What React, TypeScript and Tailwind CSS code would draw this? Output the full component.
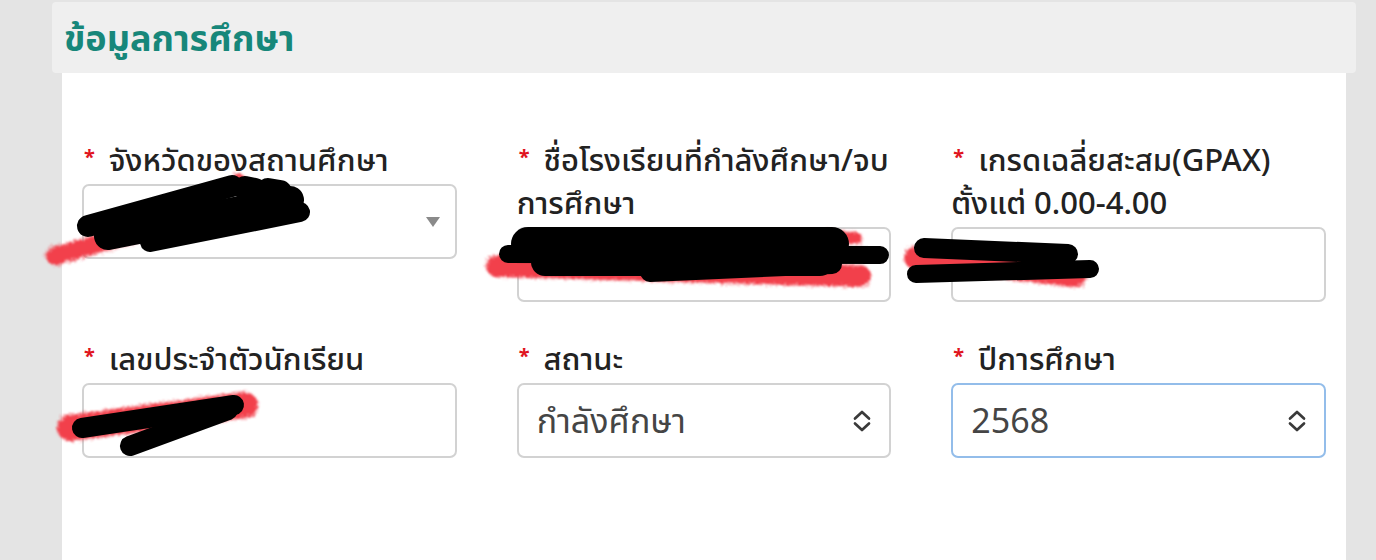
const fields = [
  { label: ['จังหวัดของสถานศึกษา'], kind: 'dropdown', value: '' },
  { label: ['ชื่อโรงเรียนที่กำลังศึกษา/จบ', 'การศึกษา'], kind: 'text', value: '' },
  { label: ['เกรดเฉลี่ยสะสม(GPAX)', 'ตั้งแต่ 0.00-4.00'], kind: 'text', value: '' },
  { label: ['เลขประจำตัวนักเรียน'], kind: 'text', value: '' },
  { label: ['สถานะ'], kind: 'select', value: 'กำลังศึกษา' },
  { label: ['ปีการศึกษา'], kind: 'select', value: '2568', focused: true },
]

function UpDown() {
  return (
    <svg width="22" height="24" viewBox="0 0 22 24" fill="none" stroke="#3a3a3a" strokeWidth="2.7" strokeLinecap="round" strokeLinejoin="round">
      <path d="M4 9.5l7-6.5 7 6.5" />
      <path d="M4 14.5l7 6.5 7-6.5" />
    </svg>
  )
}

// redaction marks drawn over the filled inputs
function Scribbles() {
  return (
    <svg className="pointer-events-none absolute left-0 top-0" width="1376" height="560" viewBox="0 0 1376 560">
      <defs>
        <filter id="fuzz" x="-20%" y="-50%" width="140%" height="200%">
          <feTurbulence type="fractalNoise" baseFrequency="0.9" numOctaves="2" result="n" />
          <feDisplacementMap in="SourceGraphic" in2="n" scale="9" />
          <feGaussianBlur stdDeviation="0.8" />
        </filter>
      </defs>
      <g filter="url(#fuzz)" stroke="#f2404c" strokeLinecap="round" fill="none">
        <path d="M55 256 L140 232" strokeWidth="18" />
        <path d="M238 178 L248 186" strokeWidth="10" />
        <path d="M497 266 L860 276" strokeWidth="22" />
        <path d="M830 236 L856 238" strokeWidth="12" />
        <path d="M915 258 L1075 276" strokeWidth="22" />
        <path d="M70 428 L245 405" strokeWidth="26" />
      </g>
      <g stroke="#000" strokeLinecap="round" strokeLinejoin="round" fill="none">
        <path d="M88 226 L232 186" strokeWidth="22" />
        <path d="M108 236 L290 200" strokeWidth="28" />
        <path d="M150 242 L300 212" strokeWidth="20" />
        <path d="M245 188 L255 190" strokeWidth="24" />
        <path d="M268 190 L280 192" strokeWidth="24" />
        <path d="M508 254 L880 255" strokeWidth="18" />
        <path d="M528 244 L832 244" strokeWidth="34" />
        <path d="M545 262 L820 262" strokeWidth="28" />
        <path d="M650 272 L832 264" strokeWidth="20" />
        <path d="M924 248 L1068 254" strokeWidth="20" />
        <path d="M916 274 L1090 269" strokeWidth="18" />
        <path d="M82 428 L234 405" strokeWidth="20" />
        <path d="M130 446 L228 410" strokeWidth="20" />
      </g>
    </svg>
  )
}

export default function App() {
  return (
    <div className="relative h-[560px] w-[1376px] overflow-hidden bg-[#e4e4e4] font-['Noto_Sans','Noto_Sans_Thai',sans-serif]">
      <div className="ml-[52px] w-[1304px] pt-[2px]">
        <div className="flex h-[71px] items-center rounded-sm bg-[#efefef] pl-3">
          <h2 className="text-[36px] font-bold text-[#17877a]">ข้อมูลการศึกษา</h2>
        </div>
        <div className="mx-[10px] h-[500px] bg-white px-5 pt-[65px]">
          <div className="grid grid-cols-3 gap-x-[60px] gap-y-[35px]">
            {fields.map((f, i) => (
              <div key={i}>
                <label className="block text-[31px] font-medium leading-[43px] text-[#222]">
                  {f.label.map((line, j) => (
                    <span key={j} className="block">
                      {j === 0 && (
                        <span className="mr-[14px] ml-[2px] inline-block align-top text-[20px] font-bold leading-[38px] text-[#e0141e]">*</span>
                      )}
                      {line}
                    </span>
                  ))}
                </label>
                <div
                  className={
                    'mt-[3px] flex h-[75px] items-center justify-between rounded-[7px] border-2 pl-[18px] pr-4 ' +
                    (f.focused ? 'border-[#93bdea]' : 'border-[#d2d2d2]')
                  }
                >
                  <span className="text-[34px] text-[#454545]">{f.value}</span>
                  {f.kind === 'select' && <UpDown />}
                  {f.kind === 'dropdown' && (
                    <span className="mr-[-1px] h-0 w-0 border-x-[7px] border-t-[10px] border-x-transparent border-t-[#8a8a8a]" />
                  )}
                </div>
              </div>
            ))}
          </div>
        </div>
      </div>
      <Scribbles />
    </div>
  )
}
